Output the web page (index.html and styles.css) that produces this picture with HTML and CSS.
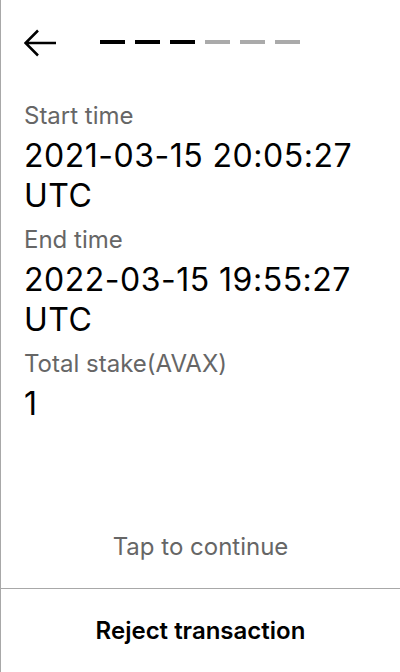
FILE: index.html
```html
<!DOCTYPE html>
<html lang="en">
<head>
<meta charset="utf-8">
<title>Review transaction</title>
<link rel="stylesheet" href="styles.css">
</head>
<body>
<div class="screen">
  <header class="header">
    <svg class="back" width="34" height="28" viewBox="0 0 34 28" aria-label="Back">
      <path d="M1.5 14 H32 M14 1.5 L1.5 14 L14 26.5" fill="none" stroke="#000" stroke-width="2.5"/>
    </svg>
    <div class="steps">
      <span class="step done"></span>
      <span class="step done"></span>
      <span class="step done"></span>
      <span class="step"></span>
      <span class="step"></span>
      <span class="step"></span>
    </div>
  </header>
  <main class="content">
    <div class="field">
      <div class="label">Start time</div>
      <div class="value">2021-03-15 20:05:27 UTC</div>
    </div>
    <div class="field">
      <div class="label">End time</div>
      <div class="value">2022-03-15 19:55:27 UTC</div>
    </div>
    <div class="field">
      <div class="label">Total stake(AVAX)</div>
      <div class="value">1</div>
    </div>
  </main>
  <div class="tap">Tap to continue</div>
  <footer class="footer">
    <div class="reject">Reject transaction</div>
  </footer>
</div>
</body>
</html>
```
FILE: styles.css
```css
html, body {
  margin: 0;
  padding: 0;
  background: #fff;
}
body {
  font-family: Inter, "Noto Sans", sans-serif;
  color: #000;
}
.screen {
  width: 400px;
  height: 672px;
  box-sizing: border-box;
  border-left: 1px solid #a8a8a8;
  display: flex;
  flex-direction: column;
}
.header {
  display: flex;
  align-items: center;
  height: 28px;
  padding: 29px 23px 0;
}
.back {
  display: block;
  flex: none;
}
.steps {
  display: flex;
  gap: 10px;
  margin-left: 42px;
  margin-bottom: 2px;
}
.step {
  display: block;
  width: 25px;
  height: 4px;
  background: #aaaaaa;
}
.step.done {
  background: #000;
}
.content {
  padding: 43px 20px 0 23px;
  display: flex;
  flex-direction: column;
  gap: 8px;
}
.label {
  font-size: 24px;
  line-height: 32px;
  color: #666;
}
.value {
  font-size: 32px;
  line-height: 40px;
  letter-spacing: 0.5px;
  margin-top: 4px;
}
.tap {
  margin-top: auto;
  margin-bottom: 25px;
  text-align: center;
  font-size: 24px;
  line-height: 32px;
  color: #666;
}
.footer {
  border-top: 1px solid #a8a8a8;
  height: 83px;
  display: flex;
  align-items: center;
  justify-content: center;
}
.reject {
  font-size: 24px;
  line-height: 32px;
  font-weight: 600;
}
```
